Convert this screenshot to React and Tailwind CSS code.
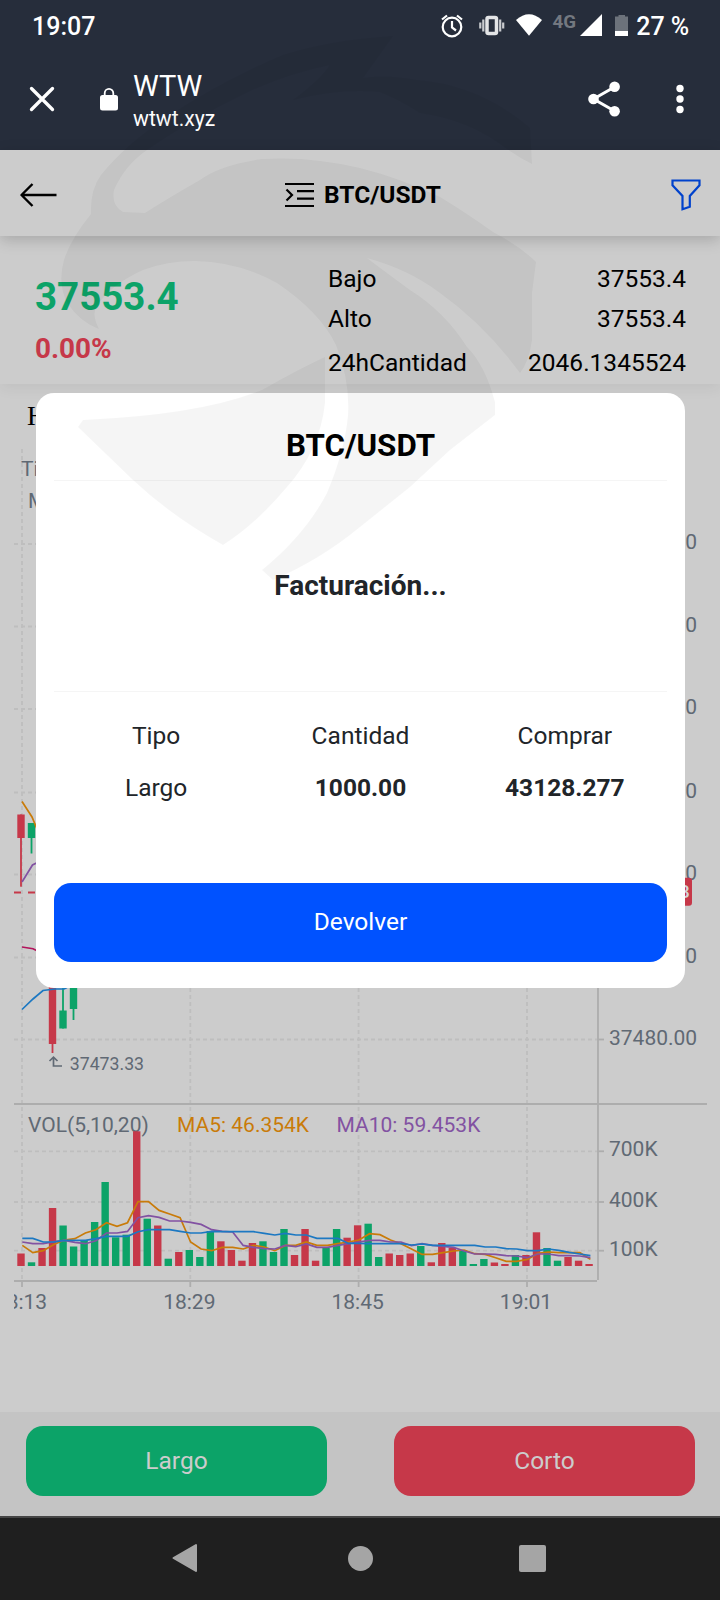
import React from "react";

const GREEN = "#0ca368";
const RED = "#c63849";
const GRID = "#bebebe";
const AXIS = "#adadad";
const LABEL = "#606974";

const STEP = 10.52;
const VOL_BASE = 1266;

// height of every volume bar, r = falling candle, g = rising candle
const volumes = [
  ["r", 12.5], ["g", 3.7], ["r", 18], ["r", 58], ["g", 40.5], ["g", 19.5], ["g", 26], ["g", 44],
  ["g", 84], ["g", 28.7], ["g", 31.3], ["r", 134.7], ["g", 47.3], ["r", 40.5], ["g", 7.3], ["r", 14],
  ["g", 16], ["g", 9], ["g", 35], ["r", 24.7], ["r", 16], ["r", 5.3], ["r", 23], ["g", 24.7],
  ["g", 14], ["g", 37], ["r", 11], ["r", 37], ["r", 5.3], ["g", 18], ["g", 37], ["r", 28.3],
  ["r", 40.7], ["g", 42.3], ["g", 9], ["r", 12.5], ["r", 11], ["r", 12.5], ["g", 20], ["r", 3.7],
  ["r", 23], ["r", 18], ["g", 16], ["g", 2], ["g", 7], ["r", 3.5], ["r", 2], ["g", 11],
  ["r", 11], ["r", 33.7], ["g", 18], ["g", 5.3], ["r", 9], ["r", 5.3], ["r", 2],
];

const ma5 = [
  467, 489, 483, 464, 451, 447, 430, 420, 399, 410, 399, 336, 336, 362, 373, 384, 457, 478, 483,
  473, 473, 478, 467, 472, 483, 467, 467, 457, 467, 467, 462, 457, 451, 432, 435, 451, 462, 478,
  494, 494, 489, 484, 481, 492, 494, 504, 515, 515, 509, 491, 487, 489, 489, 489, 509,
];
const ma10 = [
  457, 462, 462, 456, 452, 458, 462, 453, 430, 430, 425, 384, 378, 383, 394, 394, 398, 404, 420,
  425, 427, 467, 473, 477, 478, 467, 471, 463, 473, 473, 467, 462, 457, 452, 452, 457, 457, 468,
  462, 467, 470, 473, 484, 493, 493, 494, 498, 499, 504, 493, 493, 498, 498, 499, 504,
];
const ma20 = [
  446, 446, 457, 457, 452, 452, 452, 447, 440, 440, 440, 426, 420, 420, 420, 425, 430, 430, 425,
  426, 426, 426, 426, 431, 436, 431, 436, 436, 446, 446, 446, 461, 461, 462, 462, 462, 462, 466,
  463, 467, 467, 467, 467, 467, 472, 472, 477, 478, 483, 483, 478, 482, 488, 493, 498,
];

const toPoints = (values) =>
  values.map((v, i) => `${(22.3 + i * STEP).toFixed(1)},${(1089.7 + v / 3).toFixed(1)}`).join(" ");

const priceTicks = [
  { y: 544, label: "37720.00" },
  { y: 626.5, label: "37680.00" },
  { y: 709, label: "37640.00" },
  { y: 792.5, label: "37600.00" },
  { y: 874.5, label: "37560.00" },
  { y: 957.5, label: "37520.00" },
  { y: 1039.5, label: "37480.00" },
];

const volTicks = [
  { y: 1151.3, label: "700K" },
  { y: 1202, label: "400K" },
  { y: 1250.7, label: "100K" },
];

const timeTicks = [
  { x: 22, label: "18:13" },
  { x: 190.3, label: "18:29" },
  { x: 358.6, label: "18:45" },
  { x: 527, label: "19:01" },
];

const StatusBar = () => (
  <div className="flex h-12 items-center pt-[5px] pl-8 pr-[31px] text-white">
    <span className="text-[25px] font-medium leading-none">19:07</span>
    <svg className="ml-auto" width="198" height="42" viewBox="438 5 198 42">
      <g fill="none" stroke="#fff" strokeWidth="2.2">
        <circle cx="452" cy="26" r="9.3" />
        <path d="M452 20v6.500l4 3" />
        <path d="M442 18.500l5-4M462 18.500l-5-4" />
      </g>
      <rect x="487" y="16.500" width="9.500" height="16" rx="1.500" fill="none" stroke="#e3e4e6" strokeWidth="3.500" />
      <path d="M483.300 18.500v12M480.300 21.500v6M500.200 18.500v12M503.200 21.500v6" stroke="#c9cbcf" strokeWidth="2.200" />
      <path d="M516 19q13-11.500 26 0L529 34.700z" fill="#fff" />
      <text x="552.500" y="26.500" fontSize="18.800" fontWeight="700" fill="#737880">4G</text>
      <path d="M602 13v22h-22z" fill="#fff" />
      <path d="M615 15.500h3.500v-1.500h6.500v1.500h3v14.500h-13z" fill="#6c727b" />
      <rect x="615" y="30" width="13" height="5" fill="#fff" />
    </svg>
    <span className="text-[25px] font-medium leading-none tracking-[-0.1px]">27 %</span>
  </div>
);

const BrowserBar = () => (
  <div className="flex h-[102px] items-center pl-[29px] pr-[35px] text-white">
    <svg width="26" height="26" viewBox="0 0 26 26">
      <path d="M2.500 2.500l21 21M23.500 2.500l-21 21" stroke="#fff" strokeWidth="3.300" strokeLinecap="round" />
    </svg>
    <svg className="ml-[45px]" width="18" height="24" viewBox="0 0 18 24">
      <path d="M4.700 9V6.200a4.300 4.300 0 0 1 8.600 0V9" fill="none" stroke="#fff" strokeWidth="1.800" />
      <rect x="0" y="8" width="18" height="15.500" rx="2.500" fill="#fff" />
    </svg>
    <div className="ml-[15px] pt-1.5">
      <div className="text-[29px] leading-[34px]">WTW</div>
      <div className="text-[21.200px] leading-8">wtwt.xyz</div>
    </div>
    <svg className="ml-auto" width="34" height="36" viewBox="588 81 34 36">
      <path d="M614.500 87L593.500 99l21 12" fill="none" stroke="#fff" strokeWidth="3" />
      <circle cx="614.600" cy="86.700" r="5.300" fill="#fff" />
      <circle cx="593.500" cy="99" r="5.300" fill="#fff" />
      <circle cx="614.600" cy="111.200" r="5.300" fill="#fff" />
    </svg>
    <svg className="ml-[53px]" width="10" height="30" viewBox="0 0 10 30">
      <circle cx="5" cy="4.500" r="3.700" fill="#fff" />
      <circle cx="5" cy="15" r="3.700" fill="#fff" />
      <circle cx="5" cy="25.500" r="3.700" fill="#fff" />
    </svg>
  </div>
);

const PairHeader = () => (
  <div className="relative z-10 flex h-[86px] items-center bg-[#cccccc] pl-5 pr-[19px] pt-[3px] shadow-[0_4px_14px_rgba(0,0,0,0.18)]">
    <svg width="38" height="26" viewBox="0 0 38 26">
      <path d="M12.500 2L1.500 13l11 11M1.500 13H36.500" fill="none" stroke="#000" strokeWidth="2.400" strokeLinejoin="round" />
    </svg>
    <div className="flex flex-1 items-center pl-[227px]">
      <svg width="29" height="26" viewBox="0 0 29 26">
        <path d="M0 2h29M12 9.200h17M12 16.600h17M0 24h29" stroke="#000" strokeWidth="2.200" />
        <path d="M1.500 7.500L7 13l-5.500 5.500" fill="none" stroke="#000" strokeWidth="2.200" />
      </svg>
      <span className="ml-[10px] pt-0.5 text-[24.500px] font-bold leading-none text-black">BTC/USDT</span>
    </div>
    <svg width="30" height="32" viewBox="0 0 30 32">
      <path d="M1.500 1.500h27v4.800L18.800 17v10.800l-7.300 2.400V17L1.500 6.300z" fill="none" stroke="#0042cc" strokeWidth="2.200" />
    </svg>
  </div>
);

const stats = [
  { name: "Bajo", value: "37553.4", height: "h-10" },
  { name: "Alto", value: "37553.4", height: "h-10" },
  { name: "24hCantidad", value: "2046.1345524", height: "h-12" },
];

const PriceInfo = () => (
  <div className="flex h-[148px] bg-[#cccccc] pl-[35px] pr-[34px] shadow-[0_4px_14px_rgba(0,0,0,0.06)]">
    <div className="w-[293px] pt-[35px]">
      <div className="text-[38.500px] font-bold leading-[51px] text-[#0ca368]">37553.4</div>
      <div className="text-[27.900px] font-bold leading-[54px] text-[#c63849]">0.00%</div>
    </div>
    <div className="flex-1 pt-[23px] text-[24.500px] text-black">
      {stats.map((s) => (
        <div key={s.name} className={`flex items-center justify-between ${s.height}`}>
          <span>{s.name}</span>
          <span>{s.value}</span>
        </div>
      ))}
    </div>
  </div>
);

const Candle = ({ x, color, top, bottom, high, low }) => (
  <g fill={color}>
    <rect x={x - 0.9} y={high} width="1.8" height={low - high} />
    <rect x={x - 3.7} y={top} width="7.4" height={bottom - top} />
  </g>
);

const Chart = () => (
  <svg className="block" width="720" height="896" viewBox="0 444 720 896" fontSize="21">
    <g stroke={GRID} strokeWidth="1.8" strokeDasharray="4 3">
      {[...priceTicks, ...volTicks].map((t) => (
        <path key={t.label} d={`M14 ${t.y}H598`} />
      ))}
      {timeTicks.map((t) => (
        <path key={t.label} d={`M${t.x} 449V1281`} />
      ))}
    </g>
    <g stroke={AXIS} strokeWidth="1.8">
      <path d="M598 449V1280M14 1104H707M14 1281H597" />
      {[...priceTicks, ...volTicks].map((t) => (
        <path key={t.label} d={`M598 ${t.y}h6`} />
      ))}
      {timeTicks.map((t) => (
        <path key={t.label} d={`M${t.x} 1281v6`} />
      ))}
    </g>

    <g fill={LABEL}>
      {priceTicks.map((t) => (
        <text key={t.label} x="609" y={t.y + 5.4}>{t.label}</text>
      ))}
      {volTicks.map((t) => (
        <text key={t.label} x="609" y={t.y + 5}>{t.label}</text>
      ))}
      <text x="21" y="476">Time:</text>
      <text x="28" y="508">MA(5,10,30,60)</text>
    </g>

    <Candle x={21} color={RED} top={814.5} bottom={838} high={814.5} low={886.7} />
    <Candle x={31.5} color={GREEN} top={823} bottom={838} high={823} low={853.5} />
    <Candle x={52.5} color={RED} top={960} bottom={1044} high={950} low={1053} />
    <Candle x={63} color={GREEN} top={1010.5} bottom={1028.5} high={970} low={1028.5} />
    <Candle x={73.5} color={GREEN} top={970} bottom={1009} high={960} low={1020} />
    <g fill="none" strokeWidth="1.7">
      <path d="M22 801.500L32 817l5 12" stroke="#c97b09" />
      <path d="M22 882L32.500 865l6-3" stroke="#8252a2" />
      <path d="M22 947l11 1.700 6 3" stroke="#b3145c" />
      <path d="M22 1009.500L33 999l10-8.500 12-1.500h9l3-1.500" stroke="#1c78c2" />
      <path d="M14 892.500H40" stroke={RED} strokeWidth="2" strokeDasharray="7 7" />
    </g>
    <rect x="604" y="877.700" width="88" height="28" rx="3" fill={RED} />
    <text x="609" y="897.500" fontSize="19" fill="#d5d5d5" fontWeight="500">37551.38</text>
    <path d="M49.500 1061l4-3.800 4 3.800M53.500 1057.500v8.500h8.500" fill="none" stroke={LABEL} strokeWidth="1.700" />
    <text x="69.800" y="1069.500" fontSize="17.700" fill={LABEL}>37473.33</text>

    <text x="28" y="1132" fill={LABEL}>VOL(5,10,20)</text>
    <text x="177" y="1132" fill="#c97b09">MA5: 46.354K</text>
    <text x="336.500" y="1132" fill="#8252a2">MA10: 59.453K</text>

    {volumes.map(([dir, h], i) => (
      <rect
        key={i}
        x={17.3 + i * STEP}
        y={VOL_BASE - h}
        width="7.4"
        height={h}
        fill={dir === "r" ? RED : GREEN}
      />
    ))}
    <g fill="none" strokeWidth="1.7">
      <polyline points={toPoints(ma5)} stroke="#c97b09" />
      <polyline points={toPoints(ma10)} stroke="#8252a2" />
      <polyline points={toPoints(ma20)} stroke="#1c78c2" />
    </g>

    <clipPath id="timeAxis">
      <rect x="14" y="1285" width="590" height="40" />
    </clipPath>
    <g fill={LABEL} textAnchor="middle" clipPath="url(#timeAxis)">
      {timeTicks.map((t) => (
        <text key={t.label} x={t.x - 1} y="1309.400">{t.label}</text>
      ))}
    </g>
  </svg>
);

const BottomActions = () => (
  <div className="flex h-[104px] justify-between bg-[#c4c4c4] pl-[26px] pr-[25px] pt-3.5 text-[24.500px] text-[#cccccc]">
    <button className="h-[70px] w-[301px] rounded-[17px] bg-[#0ca368]">Largo</button>
    <button className="h-[70px] w-[301px] rounded-[17px] bg-[#c63849]">Corto</button>
  </div>
);

const NavBar = () => (
  <div className="flex h-[84px] items-center border-t-2 border-[#454545] bg-[#1f1f1f] pb-0.5 pl-[172px]">
    <svg width="26" height="30" viewBox="0 0 26 30">
      <path d="M1.500 15L24 2v26z" fill="#a5a5a5" stroke="#a5a5a5" strokeWidth="2" strokeLinejoin="round" />
    </svg>
    <div className="ml-[150px] size-[25px] rounded-full bg-[#a5a5a5]" />
    <div className="ml-[146px] size-[27px] rounded-[2px] bg-[#a5a5a5]" />
  </div>
);

const OrderModal = () => (
  <div className="absolute left-9 top-[393px] z-20 flex h-[595px] w-[649px] flex-col rounded-[18px] bg-white px-[18px] text-[#212529]">
    <div className="flex h-[88px] items-center justify-center border-b border-[#f5f5f5] pt-5 text-[31.300px] font-bold text-black">
      BTC/USDT
    </div>
    <div className="flex h-[211px] items-center justify-center border-b border-[#f5f5f5] text-[28px] font-bold">
      Facturación...
    </div>
    <div className="grid grid-cols-3 pt-[18px] text-center text-[24.500px] leading-[52px]">
      <span>Tipo</span>
      <span>Cantidad</span>
      <span>Comprar</span>
      <span>Largo</span>
      <span className="font-bold">1000.00</span>
      <span className="font-bold">43128.277</span>
    </div>
    <button className="mb-[26px] mt-auto h-[79px] rounded-[17px] bg-[#0052ff] text-[24.500px] text-white">Devolver</button>
  </div>
);

const Watermark = () => (
  <svg className="pointer-events-none absolute left-0 top-0 z-30" width="720" height="620" viewBox="0 0 720 620" fill="#000" fillOpacity="0.038">
    <path d="M393 36Q330 40 283 55Q223 80 167 117Q125 145 101 175Q90 190 91 214Q70 240 64 260Q57 285 68 304Q80 322 99 329Q92 316 96 307Q110 285 143 270Q167 261 195 261Q240 262 277 283Q320 312 336 345Q350 380 348 415Q345 450 327 493Q305 535 262 570L273 580Q320 560 360 527L410 487L450 450L495 415L495 402Q485 365 467 347Q445 312 410 290Q380 268 367 258Q410 270 440 293Q485 325 520 373Q529 362 532 340L532 293L536 262Q520 246 493 232Q465 212 440 197Q400 178 360 168Q310 156 262 159Q220 165 200 180Q165 200 145 213L123 212Q111 205 114 190Q125 165 147 150Q190 120 250 91Q290 73 330 65Q320 80 293 100Q340 88 380 92Q400 100 420 113Q470 120 507 149Q520 158 532 164L530 128Q480 85 417 80Q385 74 363 78Z" />
    <path d="M325 357Q297 370 262 390Q200 415 83 420L78 427L133 480Q170 515 223 545Q255 525 287 487Q320 450 325 403Z" />
  </svg>
);

const App = () => {
  return (
    <div className="relative h-[1600px] w-[720px] overflow-hidden bg-[#cccccc] font-['Roboto',sans-serif]">
      <div className="bg-[#262d3b]">
        <StatusBar />
        <BrowserBar />
      </div>
      <PairHeader />
      <PriceInfo />
      <div className="h-[60px] pl-[27px] pt-[14px] font-['Liberation_Serif',serif] text-[27px] leading-9 text-black">Hora</div>
      <Chart />
      <div className="h-[72px]" />
      <BottomActions />
      <NavBar />
      <OrderModal />
      <Watermark />
    </div>
  );
};

export default App;
